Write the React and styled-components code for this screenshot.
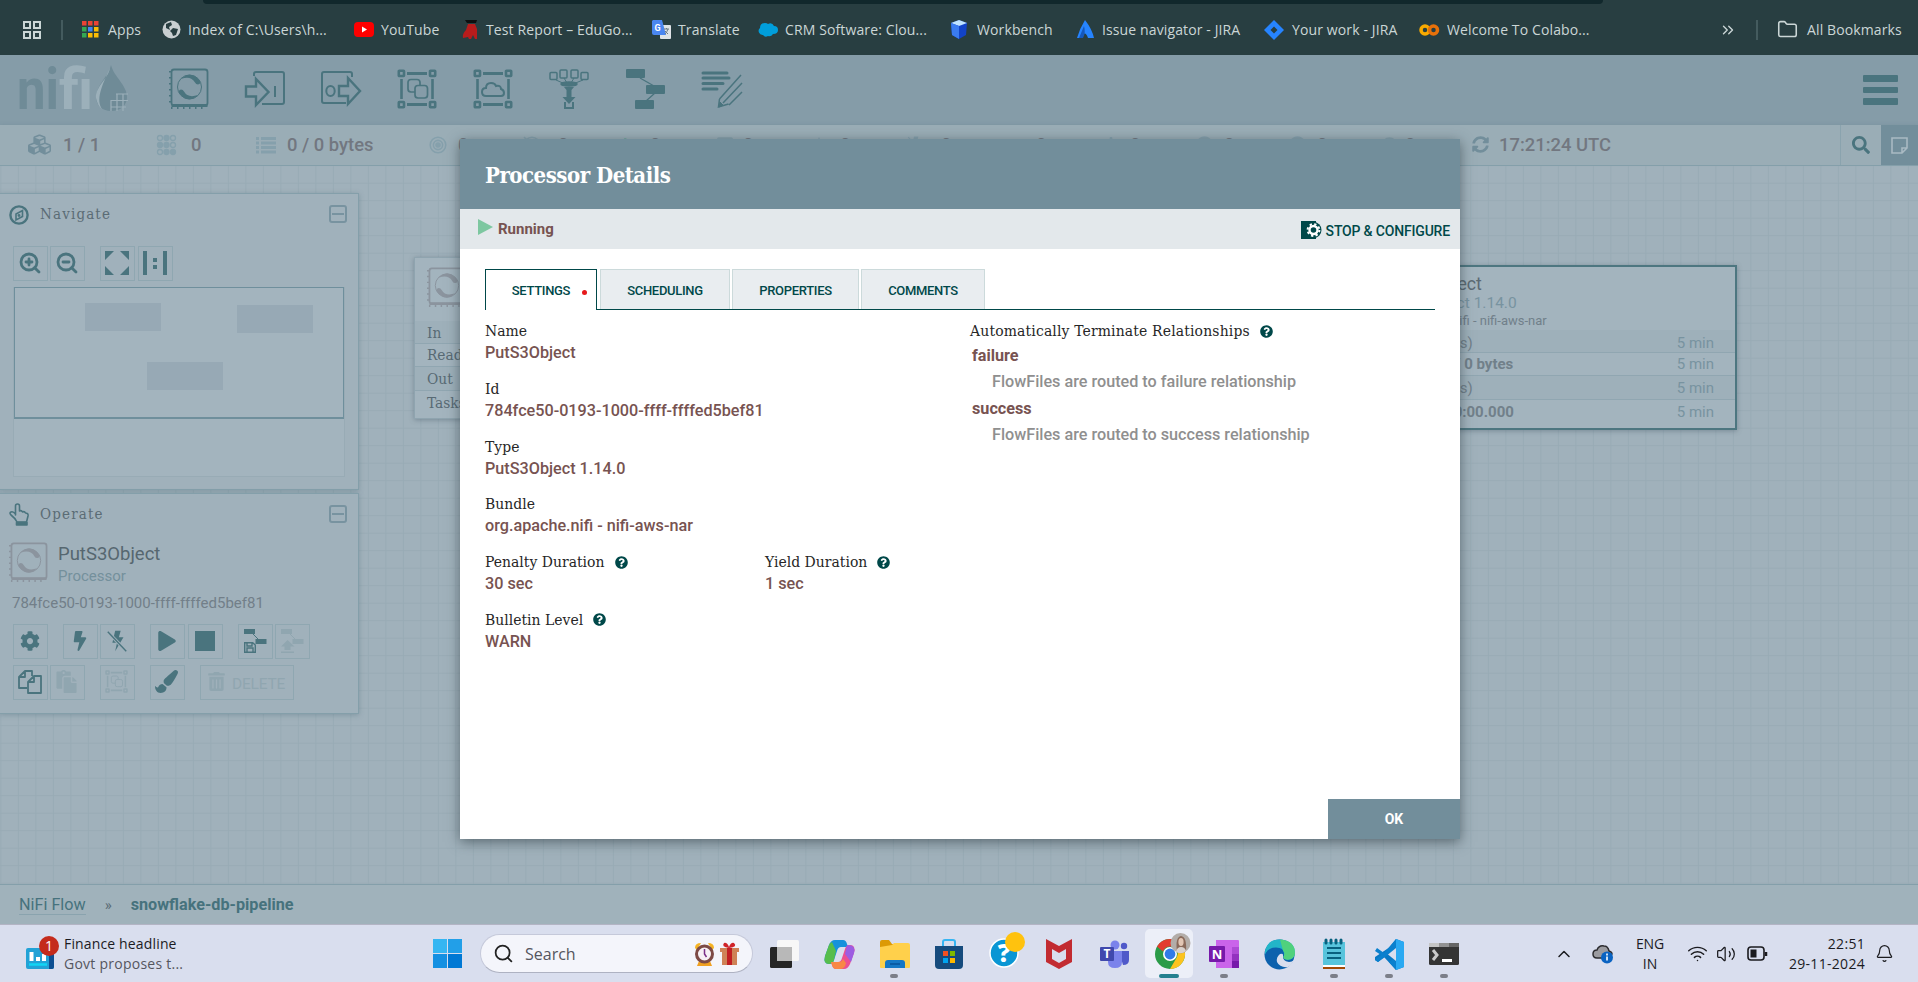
import React from "react";
import styled, { createGlobalStyle, css } from "styled-components";
import { FaCubes, FaSearch, FaPlay, FaStop, FaCog, FaBolt, FaPaintBrush, FaTrashAlt, FaPaste, FaQuestionCircle, FaSyncAlt, FaCheck, FaAsterisk } from "react-icons/fa";
import { ZoomIn, ZoomOut, Search, Wifi, Volume2, Bell, ChevronUp, Folder, ChevronsRight } from "lucide-react";

const slab = '"DejaVu Serif Condensed", "DejaVu Serif", serif';
const segoe = '"Open Sans", "Noto Sans", sans-serif';
const TEAL = "#4a747e";

const GlobalStyle = createGlobalStyle`
  html, body { margin: 0; padding: 0; }
  body { width: 1918px; height: 982px; overflow: hidden; font-family: Roboto, sans-serif; }
  * { box-sizing: border-box; }
  svg { display: block; flex: none; overflow: visible; }
`;

const Screen = styled.div`
  position: relative;
  width: 1918px;
  height: 982px;
  display: flex;
  flex-direction: column;
  overflow: hidden;
`;

/* ---------- browser bookmarks bar ---------- */
const BookmarksBar = styled.div`
  height: 55px;
  background: #283e41;
  display: flex;
  flex-direction: column;
`;
const AddressEdge = styled.div`
  height: 4px;
  width: 1400px;
  margin-left: 203px;
  background: #11282c;
  border-radius: 0 0 10px 10px;
`;
const BookmarkRow = styled.div`
  height: 51px;
  display: flex;
  align-items: center;
  font: 14px/20px ${segoe};
  color: #cbd6d6;
`;
const AppsGrid = styled.div`
  margin-left: 23px;
  width: 38px;
`;
const BarDivider = styled.div`
  width: 2px;
  height: 20px;
  background: #445b5e;
  margin-right: ${(p) => p.$right}px;
`;
const Bookmark = styled.div`
  width: ${(p) => p.$w}px;
  display: flex;
  align-items: center;
  white-space: nowrap;
  letter-spacing: 0.12px;
`;
const BookmarkIcon = styled.div`
  width: ${(p) => p.$w}px;
  flex: none;
`;
const BookmarkEnd = styled.div`
  width: ${(p) => p.$w}px;
  display: flex;
`;

/* ---------- application header ---------- */
const Header = styled.div`
  height: 70px;
  background: #859ca8;
  display: flex;
  align-items: flex-start;
`;
const Logo = styled.div`
  margin: 0 0 0 18px;
  width: 151px;
`;
const Tool = styled.div`
  width: 76.1px;
  margin-top: 14px;
`;
const Menu = styled.div`
  margin: 20px 20px 0 auto;
  width: 35px;
  display: flex;
  flex-direction: column;
  gap: 5px;
`;
const MenuBar = styled.div`
  height: 6.5px;
  border-radius: 1px;
  background: ${TEAL};
`;

/* ---------- status bar ---------- */
const StatusBar = styled.div`
  height: 41px;
  background: #9aadb6;
  border-bottom: 1px solid #849faa;
  display: flex;
  align-items: stretch;
  padding-left: 28px;
  position: relative;
  box-shadow: 0 1px 4px rgba(80, 110, 125, 0.35);
`;
const Stat = styled.div`
  width: ${(p) => p.$w}px;
  display: flex;
  align-items: center;
  color: #727780;
  font-size: 18.4px;
  font-weight: 500;
  white-space: nowrap;
  padding-bottom: 1px;
`;
const StatIcon = styled.div`
  width: ${(p) => p.$w}px;
  color: ${(p) => p.$c || "#85a0ac"};
`;
const SearchButton = styled.div`
  width: 41px;
  margin-left: auto;
  border-left: 1px solid #8aa3ae;
  color: ${TEAL};
  display: grid;
  place-items: center;
`;
const BulletinButton = styled.div`
  width: 37px;
  background: #728e9b;
  display: grid;
  place-items: center;
`;

/* ---------- canvas ---------- */
const Canvas = styled.div`
  position: relative;
  height: 718px;
  padding-top: 27px;
  background-color: #a0b1bb;
  background-image: linear-gradient(to right, #98abb5 1px, transparent 1px), linear-gradient(to bottom, #98abb5 1px, transparent 1px);
  background-size: 17.5px 17.5px;
  background-position: 0.4px -0.8px;
`;
const Panel = styled.div`
  width: 359px;
  height: ${(p) => p.$h}px;
  margin-bottom: 3px;
  border: 1px solid #849faa;
  border-left: 0;
  background: #a0b1bb;
  box-shadow: 0 1px 5px rgba(70, 100, 115, 0.35);
  padding: 11px 11px 0 9px;
`;
const PanelHead = styled.div`
  height: ${(p) => p.$h || 41}px;
  display: flex;
  align-items: flex-start;
`;
const PanelTitle = styled.div`
  font: 15px/18px ${slab};
  letter-spacing: 1.15px;
  color: #5b6c75;
  margin-left: 11px;
  flex: 1;
`;
const Collapse = styled.div`
  width: 18px;
  height: 18px;
  border: 2px solid #7893a0;
  border-radius: 3px;
  display: grid;
  place-items: center;
  &::after {
    content: "";
    width: 12px;
    height: 2px;
    background: #7893a0;
  }
`;
const ButtonRow = styled.div`
  display: flex;
  margin: 0 0 6px 4px;
`;
const IconButton = styled.div`
  width: ${(p) => p.$w || 35}px;
  height: 35px;
  margin-left: ${(p) => p.$gap || 0}px;
  border: 1px solid #8fa7b1;
  padding: 0 2px 2px 0;
  color: ${(p) => (p.$off ? "#90a6b0" : TEAL)};
  display: flex;
  align-items: center;
  justify-content: center;
  font-size: 15.5px;
  letter-spacing: -0.2px;
  gap: 6px;
`;
const ButtonText = styled.span`
  padding-top: 4px;
`;
const Birdseye = styled.div`
  position: relative;
  width: 332px;
  height: 190px;
  margin-left: 4px;
  border: 1px solid #98abb5;
  border-top: 0;
  background: #a3b4be;
`;
const Viewport = styled.div`
  width: 330px;
  height: 132px;
  border: 1px solid #6f8f9c;
  border-bottom-width: 2px;
`;
const MiniNode = styled.div`
  position: absolute;
  left: ${(p) => p.$x}px;
  top: ${(p) => p.$y}px;
  width: 76px;
  height: 28px;
  background: #97a9b5;
`;
const Selected = styled.div`
  display: flex;
  height: 50px;
  gap: 10px;
`;
const SelectedText = styled.div`
  display: flex;
  flex-direction: column;
`;
const SelectedName = styled.div`
  font-size: 18.5px;
  line-height: 23px;
  color: #566770;
`;
const SelectedKind = styled.div`
  font-size: 15px;
  line-height: 20px;
  color: #74909c;
`;
const SelectedId = styled.div`
  margin: 0 0 11px 3px;
  font-size: 15px;
  line-height: 20px;
  color: #727f89;
`;

/* ---------- flow nodes ---------- */
const Node = styled.div`
  position: absolute;
  left: ${(p) => p.$x}px;
  top: ${(p) => p.$y}px;
  width: 441px;
  height: ${(p) => p.$h}px;
  background: #a3b4be;
  border: ${(p) => (p.$selected ? "2px solid #4d7680" : "1px solid #8fa4af")};
  box-shadow: 0 1px 5px rgba(70, 90, 105, 0.45);
`;
const NodeHead = styled.div`
  height: 63px;
  padding: ${(p) => p.$t}px 0 0 12px;
  display: flex;
  gap: 35px;
  white-space: nowrap;
`;
const NodeName = styled.div`
  font-size: 17.7px;
  line-height: 21px;
  color: #5b6a73;
`;
const NodeType = styled.div`
  font-size: 15.5px;
  line-height: 17px;
  color: #7893a0;
`;
const NodeBundle = styled.div`
  font-size: 13px;
  line-height: 17px;
  color: #71808a;
`;
const NodeRow = styled.div`
  height: ${(p) => p.$h}px;
  display: flex;
  align-items: center;
  padding: ${(p) => p.$pt || 0}px 21px 0 12px;
  background: ${(p) => (p.$alt ? "#9eb0ba" : "#a3b4be")};
  border-bottom: ${(p) => (p.$last ? 0 : 1)}px solid #90a6b1;
  font-size: 15px;
  color: #7893a0;
`;
const RowLabel = styled.div`
  width: 92px;
  font: 15.3px/20px ${slab};
  color: #586a74;
`;
const RowValue = styled.div`
  flex: 1;
  color: #71808a;
  font-weight: ${(p) => (p.$bold ? 700 : 400)};
`;

/* ---------- breadcrumbs ---------- */
const Crumbs = styled.div`
  height: 41px;
  border-top: 1px solid #849faa;
  border-bottom: 1px solid #b3b4c4;
  background: #a0b2bb;
  display: flex;
  align-items: center;
  padding-left: 19px;
  font-size: 16.2px;
  line-height: 18px;
  color: #46727d;
  box-shadow: 0 -1px 4px rgba(80, 110, 125, 0.25);
`;
const CrumbLink = styled.span`
  padding-top: 1px;
  border-bottom: 1px solid #8aa3ae;
`;
const CrumbArrow = styled.span`
  margin: 0 19px 0 19px;
  font-size: 15px;
  color: #5b6c75;
`;
const CrumbCurrent = styled.span`
  font-weight: 700;
`;

/* ---------- dialog ---------- */
const Dialog = styled.div`
  position: absolute;
  left: 460px;
  top: 139px;
  width: 1000px;
  height: 700px;
  background: #fff;
  display: flex;
  flex-direction: column;
  box-shadow: 0 3px 12px rgba(40, 55, 62, 0.6);
`;
const DialogTitle = styled.div`
  height: 70px;
  background: #728e9b;
  color: #fff;
  font: bold 22px/72px ${slab};
  letter-spacing: -0.5px;
  padding-left: 25px;
`;
const DialogStatus = styled.div`
  height: 40px;
  background: #e3e8eb;
  display: flex;
  align-items: center;
  padding: 0 10px 0 18px;
  justify-content: space-between;
`;
const RunState = styled.div`
  display: flex;
  align-items: center;
  gap: 5px;
  font-size: 15px;
  font-weight: 700;
  color: #775351;
`;
const StopConfigure = styled.div`
  display: flex;
  align-items: center;
  gap: 4px;
  font-size: 14px;
  font-weight: 500;
  letter-spacing: -0.17px;
  color: #004849;
  padding-top: 1px;
`;
const StopText = styled.span`
  padding-top: 2px;
`;
const DialogBody = styled.div`
  flex: 1;
  padding: 20px 25px 0;
`;
const Tabs = styled.div`
  height: 41px;
  display: flex;
  align-items: stretch;
  border-bottom: 1px solid #004849;
`;
const Tab = styled.div`
  width: ${(p) => p.$w}px;
  margin-right: ${(p) => (p.$active ? 3 : 2)}px;
  border: 1px solid #ccdadb;
  border-bottom: 0;
  background: #e9edf0;
  display: flex;
  align-items: center;
  justify-content: center;
  padding-top: 2px;
  font-size: 13px;
  font-weight: 500;
  letter-spacing: -0.32px;
  color: #004849;
  ${(p) =>
    p.$active &&
    css`
      background: #fff;
      border-color: #004849;
      margin-bottom: -1px;
      padding-top: 1px;
      padding-left: 17px;
      gap: 12px;
    `}
`;
const Dot = styled.div`
  width: 5px;
  height: 5px;
  border-radius: 50%;
  background: #e6191b;
  margin-top: 3px;
`;
const Columns = styled.div`
  display: grid;
  grid-template-columns: 485px 1fr;
  padding-top: 10px;
`;
const FieldPair = styled.div`
  display: grid;
  grid-template-columns: 280px 1fr;
`;
const Field = styled.div`
  margin-bottom: 14.8px;
`;
const FieldLabel = styled.div`
  height: 22px;
  display: flex;
  align-items: center;
  gap: 10px;
  font: 15.5px/22px ${slab};
  color: #262626;
  white-space: nowrap;
  letter-spacing: ${(p) => p.$ls || 0.02}px;
  svg {
    color: #004849;
  }
`;
const FieldValue = styled.div`
  height: 21px;
  line-height: 22px;
  font-size: 16.2px;
  font-weight: 500;
  color: #775351;
`;
const Relationship = styled.div`
  padding-left: 2px;
  height: 53px;
  font-size: 16.2px;
  font-weight: 700;
  color: #775351;
  line-height: 28px;
`;
const RelationshipText = styled.div`
  padding-left: 20px;
  font-weight: 500;
  line-height: 23px;
  color: #8f8f8f;
`;
const DialogFoot = styled.div`
  display: flex;
  justify-content: flex-end;
`;
const OkButton = styled.div`
  width: 132px;
  height: 40px;
  background: #728e9b;
  color: #fff;
  font-size: 14px;
  font-weight: 700;
  line-height: 41px;
  text-align: center;
`;

/* ---------- taskbar ---------- */
const Taskbar = styled.div`
  height: 57px;
  background: #d9deee;
  display: flex;
  align-items: center;
  padding-left: 26px;
  font-family: ${segoe};
  color: #1b1b1f;
`;
const Widget = styled.div`
  width: 407px;
  display: flex;
  gap: 4px;
  font-size: 14px;
  line-height: 20px;
  letter-spacing: 0.15px;
`;
const Muted = styled.div`
  color: #55565e;
  letter-spacing: 0.25px;
`;
const StartButton = styled.div`
  width: 47px;
`;
const SearchPill = styled.div`
  width: 273px;
  height: 39px;
  border-radius: 20px;
  border: 1px solid #c5c9da;
  border-bottom-color: #aeb2c2;
  background: #f4f5fb;
  display: flex;
  align-items: center;
  padding: 0 12px;
  color: #222;
  gap: 4px;
`;
const SearchText = styled.div`
  flex: 1;
  margin-left: 7px;
  font-size: 16px;
  letter-spacing: 0;
  color: #55565e;
`;
const TaskIcons = styled.div`
  display: flex;
  gap: 7px;
  margin-left: 7px;
`;
const TaskSlot = styled.div`
  position: relative;
  width: 48px;
  height: 49px;
  border-radius: 5px;
  background: ${(p) => (p.$active ? "#eceff8" : "transparent")};
  display: flex;
  justify-content: center;
  padding-top: 10px;
  &::after {
    content: "";
    display: ${(p) => (p.$open || p.$active ? "block" : "none")};
    position: absolute;
    bottom: 0;
    width: ${(p) => (p.$active ? 20 : 8)}px;
    height: 4px;
    border-radius: 2px;
    background: ${(p) => (p.$active ? "#24808f" : "#7c7f89")};
  }
`;
const Tray = styled.div`
  margin-left: auto;
  margin-right: 24px;
  display: flex;
  align-items: center;
  font-size: 14px;
  line-height: 20px;
  letter-spacing: 0.3px;
`;
const TrayItem = styled.div`
  width: ${(p) => p.$w}px;
`;
const Lang = styled.div`
  width: 30px;
  text-align: center;
  letter-spacing: -0.1px;
  margin-right: 22px;
`;
const Clock = styled.div`
  width: 84px;
  text-align: right;
  margin-right: 10px;
`;

/* ---------- drawings ---------- */
const Svg = ({ w, h = w, vb, children, ...rest }) => (
  <svg width={w} height={h} viewBox={vb || `0 0 ${w} ${h}`} fill="none" {...rest}>{children}</svg>
);

const ProcessorIcon = ({ s = 40, c = TEAL }) => (
  <Svg w={s} vb="0 0 40 40" stroke={c}>
    <rect x="2.5" y="0.500" width="36" height="36" rx="2.500" strokeWidth="1.800" />
    <path d="M2.500 36.500h36" strokeWidth="2.800" />
    <path d="M1 2v36M2 39h36" strokeWidth="2" strokeDasharray="1.500 4.500" />
    <circle cx="20.500" cy="18" r="12" strokeWidth="1" />
    <path d="M12 10Q22 .5 31 12q1 3-2 3.500-2 0-3-2-4-7-14-3.500zM29 26Q19 35.500 10 24q-1-3 2-3.500 2 0 3 2 4 7 14 3.500z" fill={c} stroke="none" />
  </Svg>
);
const InputPortIcon = () => (
  <Svg w={40} stroke={TEAL} strokeWidth="2">
    <path d="M9 7V5q0-2 2-2h26q2 0 2 2v28q0 2-2 2H17" />
    <path d="M1 17.500h10V10l12.500 13L11 36v-8.500H1z" strokeWidth="2.400" />
    <path d="M30 17v11" />
  </Svg>
);
const OutputPortIcon = () => (
  <Svg w={40} stroke={TEAL} strokeWidth="2">
    <path d="M31 8V5q0-2-2-2H3Q1 3 1 5v27q0 2 2 2h22" />
    <path d="M18 17h9V9l12 13-12 13v-8h-9z" strokeWidth="2.400" />
    <ellipse cx="9.500" cy="22" rx="4.200" ry="5" />
  </Svg>
);
const Frame = ({ s = 40, c = TEAL, children }) => (
  <Svg w={s} vb="0 0 40 40" stroke={c}>
    {[1.8, 33].map((x) => [1.8, 33].map((y) => <rect key={`${x}${y}`} x={x} y={y} width="5.200" height="5.200" rx="0.500" strokeWidth="2.600" />))}
    <path d="M10 4.500h20M10 35.500h20" strokeWidth="3.200" />
    <path d="M4.500 10v20M35.500 10v20" strokeWidth="2.600" />
    {children}
  </Svg>
);
const GroupIcon = (p) => (
  <Frame {...p}>
    <rect x="11" y="10.500" width="12" height="12.500" rx="3" strokeWidth="1.700" />
    <rect x="18" y="16.500" width="12.500" height="12.500" rx="3" strokeWidth="1.700" fill={p.bg || "#859ca8"} />
  </Frame>
);
const RemoteIcon = () => (
  <Frame>
    <path d="M13 27q-4 0-4-4t4-4q0-5 5-5 4 0 5 3 5-1 5 3 3 1 3 4 0 3-3 3z" strokeWidth="2" />
  </Frame>
);
const FunnelIcon = () => (
  <Svg w={40} stroke={TEAL} strokeWidth="1.500">
    <rect x="1" y="3.500" width="7" height="7" rx="1" />
    <rect x="11" y="1" width="7" height="8" rx="1" />
    <rect x="22" y="1" width="7" height="8" rx="1" />
    <rect x="32" y="3.500" width="7" height="7" rx="1" />
    <path d="M7 11l9 4M15 9l3 5M25 9l-3 5M34 11l-10 4" strokeWidth="1" />
    <ellipse cx="20" cy="15" rx="8" ry="2" fill={TEAL} />
    <path d="M15 18h10l-2.500 3v7h4L20 35l-6.500-7h4v-7z" fill={TEAL} stroke="none" />
    <path d="M16 33v6h8v-6" strokeWidth="2" />
  </Svg>
);
const TemplateIcon = () => (
  <Svg w={40} fill={TEAL}>
    <rect width="19" height="9" rx="1" />
    <rect x="20" y="16" width="19" height="9" rx="1" />
    <rect x="9" y="31" width="19" height="9" rx="1" />
    <path d="M14 9l14 8M29 24l-9 8" stroke={TEAL} strokeWidth="1.300" />
  </Svg>
);
const LabelIcon = () => (
  <Svg w={41} stroke={TEAL}>
    <path d="M1 4h24M1 9h26M1 14.500h20M1 20h14" strokeWidth="3" strokeLinecap="round" />
    <path d="M17.500 30L39 6M21 34L40 14M27 36L40 23M17.500 30l-1 8 10-3" strokeWidth="1.500" />
    <path d="M18 33l3 3-4 2z" fill={TEAL} />
  </Svg>
);
const NifiLogo = () => (
  <Svg w={112} h={70}>
    <text x="-1" y="54" fontFamily="Roboto, sans-serif" fontWeight="700" fontSize="57" textLength="42" lengthAdjust="spacingAndGlyphs" fill="#6f8b97">ni</text>
    <text x="41" y="54" fontFamily="Roboto, sans-serif" fontWeight="700" fontSize="57" textLength="34" lengthAdjust="spacingAndGlyphs" fill="#9cb0ba">fi</text>
    <path d="M93 10C91 21 78 30 78 42c0 9 7 14 15 14 10 0 16-6 16-14 0-12-13-20-16-32z" fill="#6f8b97" />
    <path d="M92 13C90 24 77 32 78 43c1 5 3 9 6 11-6-9-1-22 8-41z" fill="#9cb0ba" />
    <path d="M93 45v11M99 39v17M105 39v17M98 39h12M93 45.500h17M93 52h15" stroke="#9cb0ba" strokeWidth="1.200" />
  </Svg>
);
const DotsIcon = () => (
  <Svg w={19} h={20} stroke="#85a0ac" strokeWidth="1.300">
    {["101", "001", "100"].map((row, j) => [...row].map((hollow, i) => (
      <circle key={`${i}${j}`} cx={3 + i * 6.5} cy={3 + j * 7} r="2.500" fill={hollow === "1" ? "none" : "#85a0ac"} />
    )))}
  </Svg>
);
const ListIcon = () => (
  <Svg w={20} h={16} stroke="#85a0ac" strokeWidth="3"><path d="M0 1.500h3M5 1.500h15M0 6h3M5 6h15M0 10.500h3M5 10.500h15M0 15h3M5 15h15" /></Svg>
);
const TargetIcon = ({ off }) => (
  <Svg w={18} stroke="#85a0ac" strokeWidth="1.600">
    <circle cx="9" cy="9" r="7.800" /><circle cx="9" cy="9" r="4.600" /><circle cx="9" cy="9" r="2" fill="#85a0ac" />
    {off && <path d="M1 1l16 16" />}
  </Svg>
);
const CompassIcon = () => (
  <Svg w={20} stroke={TEAL}>
    <circle cx="10" cy="10" r="8.600" strokeWidth="2.400" />
    <path d="M13.500 5.500v6L7 15V9z" strokeWidth="1.600" /><circle cx="10" cy="10.500" r="1.400" fill={TEAL} stroke="none" />
  </Svg>
);
const HandIcon = () => (
  <Svg w={20} h={21} vb="0 2 20 21" stroke={TEAL} strokeWidth="1.600" strokeLinejoin="round">
    <path d="M6.500 12V3q0-2 2-2t2 2v5q2-1 3 1 2-1 3 1 3 0 2.500 3l-1.500 6H8q-2-4-6-7-2-2 0-3t4.500 2z" />
    <path d="M7.500 19.500h10.500V22H7.500z" fill={TEAL} />
  </Svg>
);
const FitIcon = () => (
  <Svg w={24} fill={TEAL}><path d="M0 0h9L0 9zM24 0v9L15 0zM0 24v-9l9 9zM24 24h-9l9-9z" /></Svg>
);
const ActualIcon = () => (
  <Svg w={24} fill={TEAL}><path d="M0 0h4v24H0zM20 0h4v24h-4zM10 7h4v4h-4zM10 14h4v4h-4z" /></Svg>
);
const FlowTemplateIcon = ({ upload, c = TEAL }) => (
  <Svg w={24} h={25} fill={c}>
    <path d="M1 1h11v5H1zM12.500 11h11v5h-11z" /><path d="M9 5l7 7" stroke={c} />
    {upload ? <path d="M7.500 12l7 6.500h-4V22h-6v-3.500H1zM1 23.500h13V25H1z" /> : <path d="M1.700 14.700h8l2.600 2.300v7.300H1.700zM4 15v3h5v-3M4 24v-4h6v4" fill="none" stroke={c} strokeWidth="1.400" />}
  </Svg>
);
const CopyIcon = () => (
  <Svg w={24} stroke={TEAL} strokeWidth="1.800" strokeLinejoin="round">
    <path d="M9 18H1V7l6-6h7v5M7 1v6H1M23 6h-7l-6 6v11h13zM16 6v6h-6" />
  </Svg>
);
const OffBoltIcon = ({ s = 24, c = TEAL, bg = "#a0b1bb" }) => (
  <Svg w={s} vb="0 0 24 26"><path d="M10 2h6l-2 7h5L10 24l2-9H7z" fill={c} /><path d="M2 3l20 21" stroke={bg} strokeWidth="3.500" /><path d="M2 3l20 21" stroke={c} strokeWidth="1.500" /></Svg>
);
const StopConfigureIcon = () => (
  <Svg w={21} h={18}>
    <path d="M0 0h15v18H0z" fill="#004849" /><circle cx="12.500" cy="9" r="8" fill="#004849" />
    <circle cx="12.500" cy="9" r="4" stroke="#fff" strokeWidth="2.400" />
    <circle cx="12.500" cy="9" r="5.900" stroke="#fff" strokeWidth="2" strokeDasharray="2.300 2.330" />
  </Svg>
);
const BoardIcon = () => (
  <Svg w={17} stroke="#a9bac3" strokeWidth="1.600"><path d="M1 1h15v10l-5 5H1zM16 11h-5v5" /></Svg>
);

const googleColors = ["#ea4335", "#ea4335", "#ea4335", "#34a853", "#4285f4", "#fbbc04", "#34a853", "#fbbc04", "#fbbc04"];
const bookmarks = [
  { w: 80, i: 26, t: "Apps", icon: <Svg w={17}>{googleColors.map((c, k) => <rect key={k} x={(k % 3) * 6} y={Math.floor(k / 3) * 6} width="4.500" height="4.500" fill={c} />)}</Svg> },
  { w: 192, i: 26, t: "Index of C:\\Users\\h...", icon: <Svg w={19}><circle cx="9.500" cy="9.500" r="9" fill="#c9cfd1" /><path d="M4 4l5-2 1 3-3 2 1 3-4-2zM11 8l5 1-2 6-3 1-1-3-2-2z" fill="#283e41" /></Svg> },
  { w: 107, i: 27, t: "YouTube", icon: <Svg w={20} h={15}><rect width="20" height="15" rx="4" fill="#f00" /><path d="M8 4.500v6l5-3z" fill="#fff" /></Svg> },
  { w: 191, i: 25, t: "Test Report – EduGo...", icon: <Svg w={18} h={21}><path d="M7 5h7l2 5v10h-2l-2-4-2 4H8l-1-2-5 1q-1-4 3-8z" fill="#b71c1c" /><path d="M4 1h12l-1 3H6z" fill="#0d1011" /></Svg> },
  { w: 106, i: 26, t: "Translate", icon: <Svg w={19}><rect x="8" y="5" width="11" height="14" rx="1" fill="#dfe3e6" /><path d="M1 0h9l4 15H2q-2 0-2-2V1z" fill="#4a86f0" /><text x="2.500" y="11" fontSize="9" fontWeight="700" fontFamily="Roboto" fill="#fff">G</text><path d="M12 9h5M14.500 8v1M16 9q-1 3-3 5M13 11l3 3" stroke="#6b7a85" /></Svg> },
  { w: 192, i: 27, t: "CRM Software: Clou...", icon: <Svg w={20} h={15}><path d="M5 13a4 4 0 0 1-3-7q0-5 5-5 2 0 3 1 4-2 6 2 4 0 4 4t-5 4q-2 3-5 2-3 2-5-1z" fill="#009edb" /></Svg> },
  { w: 126, i: 27, t: "Workbench", icon: <Svg w={18} h={19}><path d="M1 3l8-3 8 3-1 12-7 4-7-4z" fill="#1243c8" /><path d="M1 3l8-3 8 3-8 3z" fill="#bfe3ff" /><path d="M1 3l8 3v13l-7-4z" fill="#3a7bf0" /></Svg> },
  { w: 188, i: 26, t: "Issue navigator - JIRA", icon: <Svg w={19} h={20}><path d="M9 0q7 9 9 18h-6Q9 9 5 18H1Q4 8 9 0z" fill="#2684ff" /><path d="M8 6l-5 12h4q3-5 1-12z" fill="#1558bc" /></Svg> },
  { w: 155, i: 28, t: "Your work - JIRA", icon: <Svg w={20}><path d="M10 0l10 10-10 10L0 10z" fill="#2684ff" /><path d="M10 6.500l3.500 3.500-3.500 3.500L6.500 10z" fill="#283e41" /></Svg> },
  { w: 300, i: 28, t: "Welcome To Colabo...", icon: <Svg w={20} h={12} strokeWidth="3.500"><circle cx="6" cy="6" r="4" stroke="#f9ab00" /><circle cx="14.500" cy="6" r="4" stroke="#e8710a" /></Svg> },
];

const stats = [
  { w: 129, i: 35, t: "1 / 1", c: "#728e9b", icon: <FaCubes size={23} /> },
  { w: 99, i: 34, t: "0", icon: <DotsIcon /> },
  { w: 173, i: 31, t: "0 / 0 bytes", icon: <ListIcon /> },
  { w: 94, i: 29, t: "0", icon: <TargetIcon /> },
  { w: 100, i: 35, t: "0", icon: <TargetIcon off /> },
  { w: 93, i: 27, t: "0", c: "#73a69e", icon: <FaPlay size={14} /> },
  { w: 94, i: 27, t: "0", icon: <FaStop size={18} /> },
  { w: 96, i: 30, t: "0", icon: <Svg w={18}><path d="M9 1l8 16H1z" fill="#85a0ac" /></Svg> },
  { w: 109, i: 35, t: "0", icon: <OffBoltIcon s={19} c="#85a0ac" bg="#9aadb6" /> },
  { w: 88, i: 21, t: "0", icon: <FaCheck size={15} /> },
  { w: 93, i: 27, t: "0", icon: <FaAsterisk size={16} /> },
  { w: 93, i: 28, t: "0", icon: <FaQuestionCircle size={17} /> },
  { w: 93, i: 28, t: "0", icon: <FaQuestionCircle size={17} /> },
  { w: 90, i: 23, t: "0", icon: <FaQuestionCircle size={15} /> },
  { w: 150, i: 27, t: "17:21:24 UTC", c: "#728e9b", icon: <FaSyncAlt size={17} /> },
];

const tasks = [
  { icon: <Svg w={30}><rect x="1" y="8" width="22" height="21" rx="1.500" fill="#252525" /><rect x="8" y="1" width="22" height="21" rx="1.500" fill="#f7f7f7" /><path d="M8 8h15v14H8z" fill="#b8b8b8" /></Svg> },
  { icon: <Svg w={31}><path d="M11 1h8q3 0 4 4l1 3h-7q-3 0-4 4l-3 9q-1 4-5 4-6 0-4-8L5 6q2-5 6-5z" fill="#1592dc" /><path d="M1 17l4-11q1-2 3-3l4 9-2 9q-1 4-5 4-6 0-4-8z" fill="#57bd4c" /><path d="M20 30h-8q-3 0-4-4l-1-3h7q3 0 4-4l3-9q1-4 5-4 6 0 4 8l-4 11q-2 5-6 5z" fill="#ec4f91" /><path d="M24 6q8 0 6 8l-3 9-6-8 2-9z" fill="#9c5de2" /><path d="M7 23h8q3 0 4-3l3 4q-1 6-6 6h-4q-3 0-4-4z" fill="#f88745" /></Svg> },
  { open: 1, icon: <Svg w={31}><path d="M1 3q0-2 2-2h7l3 4h16v8H1z" fill="#dc9a05" /><path d="M1 8l12-2 2-2h14q2 0 2 2v22q0 1-1 1H2q-1 0-1-1z" fill="#ffd04b" /><path d="M6 29v-5q0-3 3-3h14q3 0 3 3v5z" fill="#1677c5" /><path d="M11 25h10" stroke="#07529a" strokeWidth="1.500" /></Svg> },
  { icon: <Svg w={30} h={31}><path d="M9 9V3q0-2 2-2h8q2 0 2 2v6" stroke="#36b5f2" strokeWidth="2" /><path d="M1 7h28v19q0 4-4 4H5q-4 0-4-4z" fill="#164b7d" /><path d="M9 12h5v5H9z" fill="#f25022" /><path d="M16 12h5v5h-5z" fill="#7fba00" /><path d="M9 19h5v5H9z" fill="#00a4ef" /><path d="M16 19h5v5h-5z" fill="#ffb900" /></Svg> },
  { icon: <Svg w={38} h={38} style={{ margin: "-7px -4px 0 0" }}><circle cx="17" cy="21" r="14" fill="#0a96d4" stroke="#fff" strokeWidth="1.500" /><text x="17" y="30" textAnchor="middle" fontSize="25" fontWeight="800" fontFamily="Open Sans" fill="#fff">?</text><circle cx="28" cy="10" r="10" fill="#ffc20e" /></Svg> },
  { icon: <Svg w={28} h={30}><path d="M1 0l13 7 13-7v23l-13 7-13-7zM7 10v10l7 4 7-4V10l-7 4z" fill="#c22b31" fillRule="evenodd" /></Svg> },
  { icon: <Svg w={31}><circle cx="16" cy="6" r="4.500" fill="#7b83eb" /><circle cx="25" cy="7" r="3.200" fill="#5059c9" /><path d="M20 12h10v9q0 5-6 5z" fill="#5059c9" /><path d="M9 12h14v11q0 6-7 6t-7-6z" fill="#7b83eb" /><rect x="1" y="8" width="14" height="14" rx="1" fill="#4049ad" /><text x="8" y="19" textAnchor="middle" fontSize="12" fontWeight="700" fontFamily="Open Sans" fill="#fff">T</text></Svg> },
  { active: 1, icon: <Svg w={38} h={38} style={{ margin: "-7px -6px 0 0" }}><circle cx="17" cy="22" r="15" fill="#2a9b48" /><path d="M4 14.500a15 15 0 0 1 26 0H17q-5 0-7 5z" fill="#e33b2e" /><path d="M30 14.500A15 15 0 0 1 17 37l7-12q2-5-1-10.500z" fill="#fcc31e" /><circle cx="17" cy="22" r="7" fill="#fff" /><circle cx="17" cy="22" r="5.400" fill="#2f7be8" /><circle cx="27.500" cy="11" r="10" fill="#b3ada8" /><path d="M24 20q-2-15 4-16 6 1 5 15-4 4-9 1z" fill="#8a6a5a" /><ellipse cx="28" cy="10" rx="2.600" ry="4" fill="#e2c6b4" /><path d="M23 20q1-5 5-5t5 4q-4 4-10 1z" fill="#d9d2cd" /></Svg> },
  { open: 1, icon: <Svg w={30}><path d="M7 1h22q1 0 1 1v26q0 1-1 1H7z" fill="#ca64ea" /><path d="M23 8h7v7h-7z" fill="#ae4bd5" /><path d="M23 15h7v7h-7z" fill="#9332bf" /><path d="M23 22h7v7h-7z" fill="#7719aa" /><rect x="0" y="7" width="16" height="16" rx="1" fill="#7719aa" /><text x="8" y="19.500" textAnchor="middle" fontSize="13" fontWeight="700" fontFamily="Open Sans" fill="#fff">N</text></Svg> },
  { icon: <Svg w={31}><circle cx="15.500" cy="15.500" r="15" fill="#0c61ad" /><path d="M1 12Q4 0 16 .5q15 1 15 14-1 7-9 6-4-1-2-4 1-8-8-8-8 0-11 7z" fill="#23b5c8" /><path d="M16 .5q15 1 15 14-1 7-9 6-4-1-2-4 1-3-1-5z" fill="#50d17d" /><path d="M19 16q-1 6 6 7 3 0 5-2-2 5-6 7-8 1-11-5-1-5 3-8 3-1 3 1z" fill="#d9deee" /></Svg> },
  { open: 1, icon: <Svg w={24} h={31}><path d="M1 3h22v23H1z" fill="#58c4dc" /><path d="M4 1v3M9 1v3M14 1v3M19 1v3" stroke="#08617f" strokeWidth="3" strokeLinecap="round" /><path d="M5 9h14M5 14h14M5 19h14" stroke="#08617f" strokeWidth="2" /><path d="M1 26h22v2H1z" fill="#fff" /><path d="M1 28h22v2H1z" fill="#a34a05" /></Svg> },
  { open: 1, icon: <Svg w={31}><path d="M22 0l8 3v25l-8 3L10 18l-6 5-3-2v-3l15-10z" fill="#0878c4" /><path d="M1 12l2-3 7 5 12-14v31l-7-8 6-4v-8L4 23l-3-2 6-5z" fill="#0a80ce" /><path d="M22 0l8 3v25l-8 3z" fill="#2aa9f2" /><path d="M22 9v13l-8-6.500z" fill="#d9deee" /></Svg> },
  { open: 1, icon: <Svg w={30} h={30}><rect y="4" width="30" height="22" rx="1.500" fill="#343434" /><path d="M0 4h10v4H0z" fill="#c5c5c5" /><path d="M10 4h10v4H10z" fill="#929292" /><path d="M20 4h10v4H20z" fill="#666" /><path d="M4 11l4 5-4 5" stroke="#c9c9c9" strokeWidth="3" /><path d="M13 21.500h10" stroke="#fff" strokeWidth="3" /></Svg> },
];

const Help = () => <FaQuestionCircle size={13} />;

const FlowNode = ({ x, y, h, selected }) => (
  <Node $x={x} $y={y} $h={h} $selected={selected}>
    <NodeHead $t={selected ? 7 : 10}>
      <ProcessorIcon s={39} c="#8b949e" />
      <div>
        <NodeName>PutS3Object</NodeName>
        <NodeType>PutS3Object 1.14.0</NodeType>
        <NodeBundle>org.apache.nifi - nifi-aws-nar</NodeBundle>
      </div>
    </NodeHead>
    <NodeRow $h={23} $alt $pt={selected ? 3 : 1}><RowLabel>In</RowLabel><RowValue>0 (0 bytes)</RowValue>5 min</NodeRow>
    <NodeRow $h={23}><RowLabel>Read/Write</RowLabel><RowValue $bold>0 bytes / 0 bytes</RowValue>5 min</NodeRow>
    <NodeRow $h={24} $alt $pt={1}><RowLabel>Out</RowLabel><RowValue>0 (0 bytes)</RowValue>5 min</NodeRow>
    <NodeRow $h={24} $last><RowLabel>Tasks/Time</RowLabel><RowValue $bold>0 / 00:00:00.000</RowValue>5 min</NodeRow>
  </Node>
);

export default function App() {
  return (
    <Screen>
      <GlobalStyle />
      <BookmarksBar>
        <AddressEdge />
        <BookmarkRow>
          <AppsGrid>
            <Svg w={18} stroke="#cbd6d6" strokeWidth="2">
              {[1, 11].map((x) => [1, 11].map((y) => <rect key={`${x}${y}`} x={x} y={y} width="6" height="6" />))}
            </Svg>
          </AppsGrid>
          <BarDivider $right={19} />
          {bookmarks.map((b) => (
            <Bookmark key={b.t} $w={b.w}><BookmarkIcon $w={b.i}>{b.icon}</BookmarkIcon>{b.t}</Bookmark>
          ))}
          <BookmarkEnd $w={37}><ChevronsRight size={18} strokeWidth={1.8} /></BookmarkEnd>
          <BarDivider $right={19} />
          <Bookmark $w={130}><BookmarkIcon $w={30}><Folder size={21} strokeWidth={1.8} /></BookmarkIcon>All Bookmarks</Bookmark>
        </BookmarkRow>
      </BookmarksBar>

      <Header>
        <Logo><NifiLogo /></Logo>
        {[<ProcessorIcon />, <InputPortIcon />, <OutputPortIcon />, <GroupIcon />, <RemoteIcon />, <FunnelIcon />, <TemplateIcon />, <LabelIcon />].map((icon, k) => (
          <Tool key={k}>{icon}</Tool>
        ))}
        <Menu><MenuBar /><MenuBar /><MenuBar /></Menu>
      </Header>

      <StatusBar>
        {stats.map((s, k) => (
          <Stat key={k} $w={s.w}><StatIcon $w={s.i} $c={s.c}>{s.icon}</StatIcon>{s.t}</Stat>
        ))}
        <SearchButton><FaSearch size={18} /></SearchButton>
        <BulletinButton><BoardIcon /></BulletinButton>
      </StatusBar>

      <Canvas>
        <Panel $h={297}>
          <PanelHead><CompassIcon /><PanelTitle>Navigate</PanelTitle><Collapse /></PanelHead>
          <ButtonRow>
            <IconButton><ZoomIn size={24} strokeWidth={2.8} /></IconButton>
            <IconButton $gap={2}><ZoomOut size={24} strokeWidth={2.8} /></IconButton>
            <IconButton $gap={15}><FitIcon /></IconButton>
            <IconButton $gap={3}><ActualIcon /></IconButton>
          </ButtonRow>
          <Birdseye>
            <Viewport />
            <MiniNode $x={71} $y={16} />
            <MiniNode $x={222.5} $y={17.5} />
            <MiniNode $x={133} $y={75} />
          </Birdseye>
        </Panel>
        <Panel $h={221}>
          <PanelHead $h={38}><HandIcon /><PanelTitle>Operate</PanelTitle><Collapse /></PanelHead>
          <Selected>
            <ProcessorIcon s={39} c="#8b949e" />
            <SelectedText><SelectedName>PutS3Object</SelectedName><SelectedKind>Processor</SelectedKind></SelectedText>
          </Selected>
          <SelectedId>784fce50-0193-1000-ffff-ffffed5bef81</SelectedId>
          <ButtonRow>
            <IconButton><FaCog size={20} /></IconButton>
            <IconButton $gap={15}><FaBolt size={20} /></IconButton>
            <IconButton $gap={2}><OffBoltIcon /></IconButton>
            <IconButton $gap={15}><FaPlay size={20} /></IconButton>
            <IconButton $gap={3}><Svg w={20}><path d="M0 0h20v20H0z" fill={TEAL} /></Svg></IconButton>
            <IconButton $gap={15}><FlowTemplateIcon /></IconButton>
            <IconButton $gap={2} $off><FlowTemplateIcon upload c="#90a6b0" /></IconButton>
          </ButtonRow>
          <ButtonRow>
            <IconButton><CopyIcon /></IconButton>
            <IconButton $gap={2} $off><FaPaste size={23} /></IconButton>
            <IconButton $gap={15} $off><GroupIcon s={23} c="#90a6b0" bg="#a0b1bb" /></IconButton>
            <IconButton $gap={15}><FaPaintBrush size={23} /></IconButton>
            <IconButton $gap={15} $w={94} $off><FaTrashAlt size={19} /><ButtonText>DELETE</ButtonText></IconButton>
          </ButtonRow>
        </Panel>
        <FlowNode x={414} y={91} h={162} />
        <FlowNode x={1296} y={99} h={165} selected />
      </Canvas>

      <Crumbs>
        <CrumbLink>NiFi Flow</CrumbLink><CrumbArrow>»</CrumbArrow><CrumbCurrent>snowflake-db-pipeline</CrumbCurrent>
      </Crumbs>

      <Taskbar>
        <Widget>
          <Svg w={34} h={38}>
            <rect y="14" width="28" height="21" rx="2" fill="#22a2d6" /><path d="M23 16h5v17q0 2-2 2h-3z" fill="#0d4f92" />
            <path d="M5.500 18v9M12 23v4M18 20v7" stroke="#fff" strokeWidth="4" /><path d="M3 30.500h18" stroke="#10d5f5" strokeWidth="2.500" />
            <circle cx="23" cy="12" r="10" fill="#c42b1c" /><text x="23" y="17" textAnchor="middle" fontSize="14" fontFamily="Open Sans" fill="#fff">1</text>
          </Svg>
          <div><div>Finance headline</div><Muted>Govt proposes t...</Muted></div>
        </Widget>
        <StartButton>
          <Svg w={29}><path d="M0 0h14v14H0z" fill="#35b6f2" /><path d="M15 0h14v14H15z" fill="#229fe8" /><path d="M0 15h14v14H0z" fill="#1490e2" /><path d="M15 15h14v14H15z" fill="#0078d4" /></Svg>
        </StartButton>
        <SearchPill>
          <Search size={21} strokeWidth={2} />
          <SearchText>Search</SearchText>
          <Svg w={21} h={24}><path d="M1 6q0-5 6-5l-4 7zM20 6q0-5-6-5l4 7z" fill="#f5b324" /><path d="M5 19h11l2 5H3z" fill="#f0a020" /><circle cx="10.500" cy="12" r="8" fill="#f7f1f5" stroke="#7d4a45" strokeWidth="3" /><path d="M10.500 7v5l2 3" stroke="#7a2f86" strokeWidth="1.500" /></Svg>
          <Svg w={21} h={24}><path d="M1 6h19v4H1zM3 10h15v13H3z" fill="#cf8257" /><path d="M8 6h5v17H8z" fill="#c11f24" /><path d="M10 6Q2 5 5 1q3-1 5 4 2-5 5-4 4 4-5 5z" fill="#d02329" /></Svg>
        </SearchPill>
        <TaskIcons>
          {tasks.map((t, k) => <TaskSlot key={k} $open={t.open} $active={t.active}>{t.icon}</TaskSlot>)}
        </TaskIcons>
        <Tray>
          <TrayItem $w={38}><ChevronUp size={20} strokeWidth={1.8} /></TrayItem>
          <TrayItem $w={43}>
            <Svg w={22} h={20}><path d="M5 14q-4 0-4-4t4-4q2-5 7-4 4 0 5 5 3 1 3 3l-7 4z" fill="#9b9ba0" stroke="#2b2b2f" strokeWidth="1.500" /><circle cx="15" cy="13.500" r="6" fill="#0a63c2" /><path d="M15 9.500v2M15 12.500v4" stroke="#fff" strokeWidth="1.600" /></Svg>
          </TrayItem>
          <Lang><div>ENG</div><div>IN</div></Lang>
          <TrayItem $w={29}><Wifi size={21} strokeWidth={1.7} /></TrayItem>
          <TrayItem $w={31}><Volume2 size={20} strokeWidth={1.5} /></TrayItem>
          <TrayItem $w={34}>
            <Svg w={21} h={16} stroke="#1b1b1f"><rect x="1" y="1" width="16" height="13" rx="3" strokeWidth="1.600" /><rect x="3.500" y="3.500" width="6" height="8" fill="#1b1b1f" stroke="none" /><path d="M19 6v4" strokeWidth="2.500" /></Svg>
          </TrayItem>
          <Clock><div>22:51</div><div>29-11-2024</div></Clock>
          <Bell size={19} strokeWidth={1.5} />
        </Tray>
      </Taskbar>

      <Dialog>
        <DialogTitle>Processor Details</DialogTitle>
        <DialogStatus>
          <RunState><Svg w={15} h={20}><path d="M0 0v16l15-8z" fill="#7dc7a0" /></Svg>Running</RunState>
          <StopConfigure><StopConfigureIcon /><StopText>STOP &amp; CONFIGURE</StopText></StopConfigure>
        </DialogStatus>
        <DialogBody>
          <Tabs>
            <Tab $w={112} $active>SETTINGS<Dot /></Tab>
            <Tab $w={130}>SCHEDULING</Tab>
            <Tab $w={127}>PROPERTIES</Tab>
            <Tab $w={124}>COMMENTS</Tab>
          </Tabs>
          <Columns>
            <div>
              <Field><FieldLabel>Name</FieldLabel><FieldValue>PutS3Object</FieldValue></Field>
              <Field><FieldLabel>Id</FieldLabel><FieldValue>784fce50-0193-1000-ffff-ffffed5bef81</FieldValue></Field>
              <Field><FieldLabel>Type</FieldLabel><FieldValue>PutS3Object 1.14.0</FieldValue></Field>
              <Field><FieldLabel>Bundle</FieldLabel><FieldValue>org.apache.nifi - nifi-aws-nar</FieldValue></Field>
              <FieldPair>
                <Field><FieldLabel>Penalty Duration<Help /></FieldLabel><FieldValue>30 sec</FieldValue></Field>
                <Field><FieldLabel>Yield Duration<Help /></FieldLabel><FieldValue>1 sec</FieldValue></Field>
              </FieldPair>
              <Field><FieldLabel>Bulletin Level<Help /></FieldLabel><FieldValue>WARN</FieldValue></Field>
            </div>
            <div>
              <FieldLabel $ls={0.16}>Automatically Terminate Relationships<Help /></FieldLabel>
              <Relationship>failure<RelationshipText>FlowFiles are routed to failure relationship</RelationshipText></Relationship>
              <Relationship>success<RelationshipText>FlowFiles are routed to success relationship</RelationshipText></Relationship>
            </div>
          </Columns>
        </DialogBody>
        <DialogFoot><OkButton>OK</OkButton></DialogFoot>
      </Dialog>
    </Screen>
  );
}
